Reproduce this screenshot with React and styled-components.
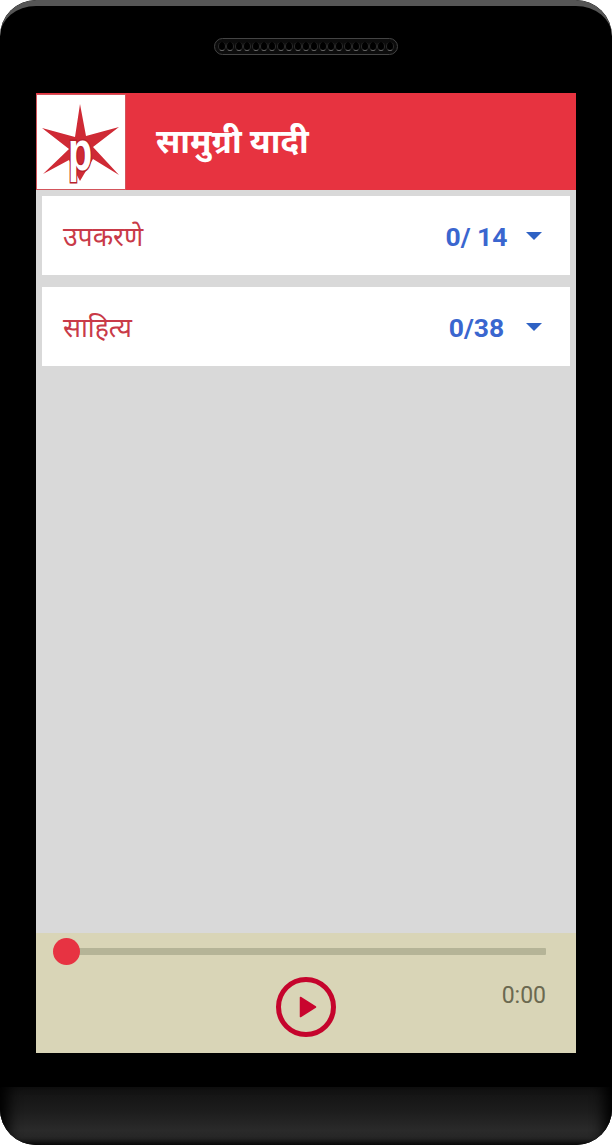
import React from 'react';
import styled, { createGlobalStyle } from 'styled-components';

const items = [
    { title: 'उपकरणे', count: '0/ 14' },
    { title: 'साहित्य', count: '0/38' },
];

const holes = Array.from({ length: 21 });

const App = () => {
    return (
        <>
            <GlobalStyle />
            <Phone>
                <TopBezel>
                    <Speaker>
                        {holes.map((_, i) => <Hole key={i} />)}
                    </Speaker>
                </TopBezel>

                <Screen>
                    <Header>
                        <LogoBox>
                            <Logo />
                        </LogoBox>
                        <Title>सामुग्री यादी</Title>
                    </Header>

                    <List>
                        {items.map((item) => (
                            <Card key={item.title}>
                                <CardTitle>{item.title}</CardTitle>
                                <CardRight>
                                    <Count>{item.count}</Count>
                                    <Caret />
                                </CardRight>
                            </Card>
                        ))}
                    </List>

                    <Player>
                        <Track>
                            <Thumb />
                        </Track>
                        <Controls>
                            <PlayButton aria-label="play">
                                <PlayIcon />
                            </PlayButton>
                            <Time>0:00</Time>
                        </Controls>
                    </Player>
                </Screen>

                <BottomBezel>
                    <Chin />
                </BottomBezel>
            </Phone>
        </>
    );
};

const Logo = () => (
    <svg width="88" height="94" viewBox="0 0 88 94">
        <polygon
            fill="#cf2a35"
            points="43,9 49,41 82,32 56,52 82,80 56,64 43,86 32,65 6,79 32,54 5,33 38,42"
        />
        <LogoLetter transform="translate(43 75) scale(0.72 1)" textAnchor="middle">p</LogoLetter>
    </svg>
);

const PlayIcon = () => (
    <svg width="20" height="24" viewBox="0 0 20 24">
        <path d="M2.5 2.5 L17.5 12 L2.5 21.5 Z" fill="#c9052e" stroke="#c9052e" strokeWidth="1.5" strokeLinejoin="round" />
    </svg>
);

const GlobalStyle = createGlobalStyle`
    html, body {
        margin: 0;
        padding: 0;
        background: #fff;
    }
`;

const Phone = styled.div`
    width: 612px;
    height: 1145px;
    background: #000;
    border-radius: 36px;
    overflow: hidden;
    display: flex;
    flex-direction: column;
    font-family: Roboto, "Noto Sans", sans-serif;
`;

const TopBezel = styled.div`
    height: 93px;
    flex: none;
    box-sizing: border-box;
    padding-top: 32px;
    display: flex;
    justify-content: center;
    align-items: flex-start;
    border-top: 6px solid #565656;
    border-radius: 36px 36px 0 0;
`;

const Speaker = styled.div`
    width: 184px;
    height: 17px;
    box-sizing: border-box;
    border: 1.5px solid #444;
    border-radius: 9px;
    padding: 0 3px;
    display: flex;
    align-items: center;
    justify-content: space-between;
    background: #0c0c0c;
`;

const Hole = styled.span`
    width: 8px;
    height: 9px;
    box-sizing: border-box;
    border-radius: 50%;
    border-bottom: 1px solid #6a6a6a;
    border-left: 1px solid #2c2c2c;
    border-right: 1px solid #2c2c2c;
    background: #000;
`;

const Screen = styled.div`
    width: 540px;
    height: 960px;
    flex: none;
    margin: 0 auto;
    background: #d9d9d9;
    display: flex;
    flex-direction: column;
`;

const Header = styled.div`
    height: 97px;
    flex: none;
    background: #e73340;
    display: flex;
    align-items: center;
`;

const LogoBox = styled.div`
    width: 90px;
    height: 96px;
    flex: none;
    box-sizing: border-box;
    border: 1px solid #d3555c;
    background: #fff;
    display: flex;
    align-items: center;
    justify-content: center;
`;

const LogoLetter = styled.text`
    font-family: "Liberation Sans", sans-serif;
    font-weight: 700;
    font-size: 55px;
    fill: #fff;
    stroke: #b8222c;
    stroke-width: 3px;
    paint-order: stroke;
`;

const Title = styled.div`
    margin-left: 30px;
    color: #fff;
    font-size: 33px;
    font-weight: 700;
    line-height: 1;
`;

const List = styled.div`
    flex: 1;
    padding: 6px 6px 0;
    display: flex;
    flex-direction: column;
    gap: 12px;
`;

const Card = styled.div`
    height: 79px;
    background: #fff;
    display: flex;
    align-items: center;
    justify-content: space-between;
    padding: 0 28px 0 21px;
`;

const CardTitle = styled.div`
    color: #c93a48;
    font-size: 26.6px;
    line-height: 1;
    margin-top: 3px;
`;

const CardRight = styled.div`
    display: flex;
    align-items: center;
    gap: 14px;
`;

const Count = styled.div`
    width: 71px;
    text-align: center;
    color: #3a66cf;
    font-size: 26.5px;
    font-weight: 700;
    line-height: 1;
    margin-top: 3px;
`;

const Caret = styled.span`
    width: 0;
    height: 0;
    margin-top: 1px;
    border-left: 8px solid transparent;
    border-right: 8px solid transparent;
    border-top: 8px solid #2f62c4;
`;

const Player = styled.div`
    height: 120px;
    flex: none;
    box-sizing: border-box;
    background: #d9d5b7;
    padding: 15px 30px 0;
`;

const Track = styled.div`
    height: 7px;
    background: #b5b497;
    border-radius: 1px;
    position: relative;
`;

const Thumb = styled.span`
    position: absolute;
    left: -13px;
    top: -10px;
    width: 27px;
    height: 27px;
    border-radius: 50%;
    background: #e73342;
`;

const Controls = styled.div`
    position: relative;
    display: flex;
    justify-content: flex-end;
    padding-top: 27px;
`;

const PlayButton = styled.div`
    position: absolute;
    left: 210px;
    top: 22px;
    width: 60px;
    height: 60px;
    box-sizing: border-box;
    border: 5px solid #c5042c;
    border-radius: 50%;
    display: flex;
    align-items: center;
    justify-content: center;
    padding-left: 3px;
`;

const Time = styled.div`
    color: #6b6950;
    font-size: 23px;
    line-height: 28px;
`;

const BottomBezel = styled.div`
    flex: 1;
    display: flex;
    flex-direction: column;
    justify-content: flex-end;
`;

const Chin = styled.div`
    height: 58px;
    background: linear-gradient(to bottom, #121212 0%, #1c1c1c 40%, #2a2a2a 75%, #262626 88%, #0c0c0c 100%);
    box-shadow: inset 16px 0 14px -8px #000, inset -16px 0 14px -8px #000;
`;

export default App;
